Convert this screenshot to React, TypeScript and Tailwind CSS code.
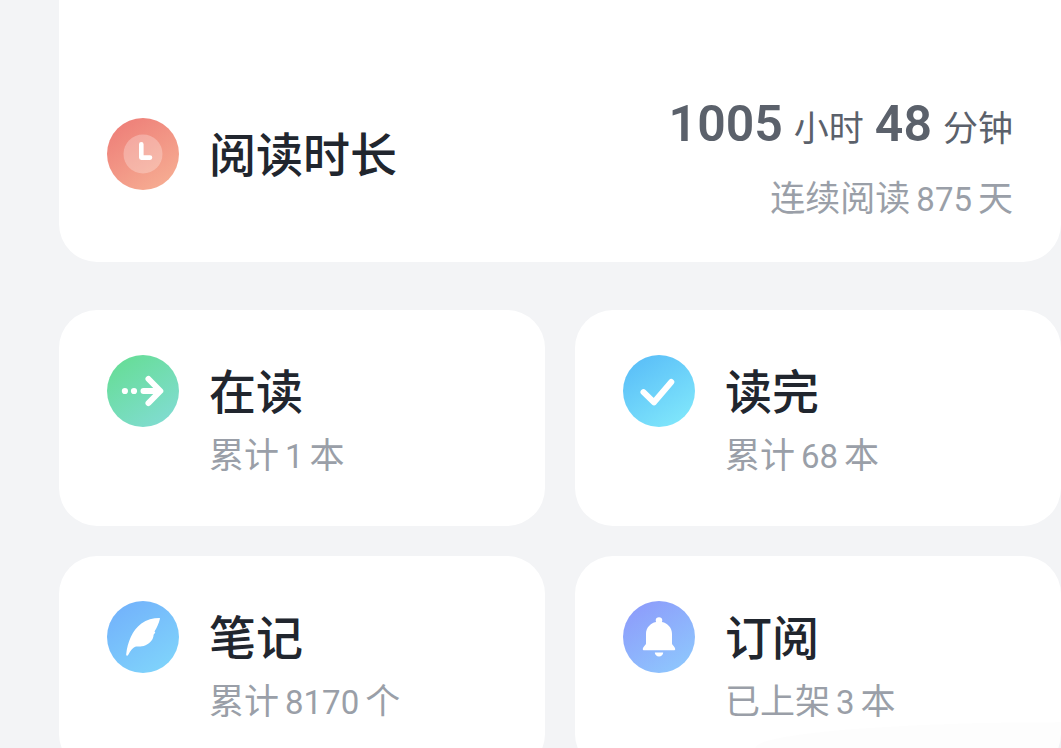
import type { ReactNode } from "react";

function Disc({ id, from, to, children }: { id: string; from: string; to: string; children: ReactNode }) {
  return (
    <svg viewBox="0 0 72 72" className="size-[72px] shrink-0" aria-hidden="true">
      <defs>
        <linearGradient id={id} x1="0.2" y1="0.05" x2="0.8" y2="0.95">
          <stop offset="0" stopColor={from} />
          <stop offset="1" stopColor={to} />
        </linearGradient>
      </defs>
      <circle cx="36" cy="36" r="36" fill={`url(#${id})`} />
      {children}
    </svg>
  );
}

function ClockIcon() {
  return (
    <Disc id="clock" from="#ee8079" to="#f6ac92">
      <circle cx="36" cy="36" r="19.5" fill="#fff" fillOpacity="0.27" />
      <path d="M34.3 26.3V39.6H43" fill="none" stroke="#fff" strokeWidth="4.6" strokeLinecap="round" strokeLinejoin="round" />
    </Disc>
  );
}

function ArrowIcon() {
  return (
    <Disc id="arrow" from="#67dd98" to="#80dcd0">
      <circle cx="17.9" cy="36" r="3.1" fill="#fff" />
      <circle cx="27" cy="36" r="3.1" fill="#fff" />
      <path d="M36.5 36H52M41.5 24L53.3 36L41.5 48" fill="none" stroke="#fff" strokeWidth="6" strokeLinecap="round" strokeLinejoin="round" />
    </Disc>
  );
}

function CheckIcon() {
  return (
    <Disc id="check" from="#5bbff8" to="#7fe6fb">
      <path d="M20.5 37.2L31 47.3L48.3 27" fill="none" stroke="#fff" strokeWidth="6" strokeLinecap="round" strokeLinejoin="round" />
    </Disc>
  );
}

function FeatherIcon() {
  return (
    <Disc id="feather" from="#73b3fb" to="#7fd3fb">
      <path
        d="M52.6 17C46 17 39.6 18.6 34.4 22.4C25.6 28.8 20.4 41 19.2 53.2C19.1 54.9 20.5 55.2 21.3 53.8C23.4 49.8 25.4 46.8 28.2 45.7C30.4 44.9 34 46.2 38.6 44.2C43.6 42 46.4 38.4 46.6 33.8L48.3 31.4L47.5 30.6C50 26.6 51.9 22 53 17.4Z"
        fill="#fff"
      />
    </Disc>
  );
}

function BellIcon() {
  return (
    <Disc id="bell" from="#8d9dfb" to="#8ec6fd">
      <path
        d="M36 16.3C38 16.3 39.3 17.6 39.3 19.3C39.3 19.9 39.2 20.4 38.9 20.9C44.8 22 49 26.8 49 33V42.6C49 44.2 52.2 45.6 52.2 48.3C52.2 49 51.7 49.3 51 49.3H21C20.3 49.3 19.8 49 19.8 48.3C19.8 45.6 23 44.2 23 42.6V33C23 26.8 27.2 22 33.1 20.9C32.8 20.4 32.7 19.9 32.7 19.3C32.7 17.6 34 16.3 36 16.3Z"
        fill="#fff"
      />
      <path d="M31.8 51.6H40.2C40.2 54 38.4 55.5 36 55.5S31.8 54 31.8 51.6Z" fill="#fff" />
    </Disc>
  );
}

const stats = [
  { title: "在读", before: "累计", count: "1", unit: "本", icon: <ArrowIcon /> },
  { title: "读完", before: "累计", count: "68", unit: "本", icon: <CheckIcon /> },
  { title: "笔记", before: "累计", count: "8170", unit: "个", icon: <FeatherIcon /> },
  { title: "订阅", before: "已上架", count: "3", unit: "本", icon: <BellIcon /> },
];

function Summary({ before, count, unit }: { before: string; count: string; unit: string }) {
  return (
    <p className="flex h-12 items-baseline gap-[6px] text-[35px] leading-[48px] text-[#9a9fa8]">
      <span>{before}</span>
      <span className="font-[Roboto,sans-serif] text-[33px]">{count}</span>
      <span>{unit}</span>
    </p>
  );
}

export default function App() {
  return (
    <main className="relative flex h-screen flex-col gap-12 overflow-hidden bg-[#f3f4f6] pl-[59px] font-['Noto_Sans_CJK_SC',sans-serif]">
      <a href="#time" className="flex shrink-0 items-center justify-between rounded-b-[38px] bg-white pt-[88px] pr-12 pb-[42px] pl-12">
        <span className="flex items-center gap-[30px]">
          <ClockIcon />
          <h2 className="pb-1 text-[47px] leading-[64px] font-medium text-[#21262e]">阅读时长</h2>
        </span>
        <span className="flex flex-col items-end gap-3">
          <span className="flex h-[72px] items-baseline gap-[11px] text-[35px] leading-[72px] text-[#5b616b]">
            <strong className="font-[Roboto,sans-serif] text-[50px] font-semibold">1005</strong>
            <span>小时</span>
            <strong className="font-[Roboto,sans-serif] text-[50px] font-semibold">48</strong>
            <span>分钟</span>
          </span>
          <Summary before="连续阅读" count="875" unit="天" />
        </span>
      </a>
      <section className="grid shrink-0 grid-cols-2 gap-[30px]">
        {stats.map((s) => (
          <a key={s.title} href={`#${s.title}`} className="flex items-start gap-[30px] rounded-[38px] bg-white px-12 pt-[45px] pb-[49px]">
            {s.icon}
            <span>
              <h2 className="mt-0.5 mb-2 text-[47px] leading-[64px] font-medium text-[#21262e]">{s.title}</h2>
              <Summary before={s.before} count={s.count} unit={s.unit} />
            </span>
          </a>
        ))}
      </section>
      <div className="pointer-events-none absolute right-0 bottom-0 h-[26px] w-[306px] rounded-tl-[100%] bg-black/[0.008]" />
    </main>
  );
}
